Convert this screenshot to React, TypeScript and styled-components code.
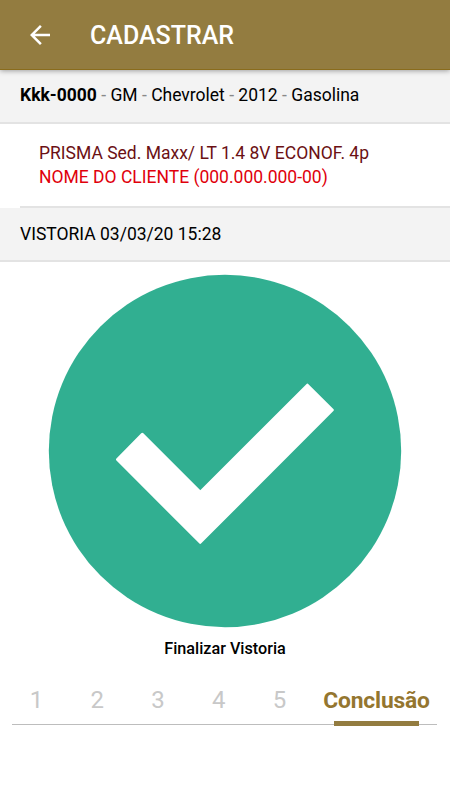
import React, { useState } from 'react';
import styled, { createGlobalStyle } from 'styled-components';

const STEPS = ['1', '2', '3', '4', '5'];

const App: React.FC = () => {
  const [step, setStep] = useState('final');

  return (
    <Screen>
      <GlobalStyle />
      <Header>
        <BackButton aria-label="Voltar">
          <svg width="20" height="20" viewBox="4 4 16 16" fill="#fff">
            <path d="M20 11H7.83l5.59-5.59L12 4l-8 8 8 8 1.41-1.41L7.83 13H20v-2z" />
          </svg>
        </BackButton>
        <Title>CADASTRAR</Title>
      </Header>

      <Bar $bottom={2}>
        <BarText>
          <strong>Kkk-0000</strong> <i>-</i> GM <i>-</i> Chevrolet <i>-</i> 2012 <i>-</i> Gasolina
        </BarText>
      </Bar>

      <Details>
        <Vehicle>PRISMA Sed. Maxx/ LT 1.4 8V ECONOF. 4p</Vehicle>
        <Client>NOME DO CLIENTE (000.000.000-00)</Client>
      </Details>

      <Bar>
        <BarText>VISTORIA 03/03/20 15:28</BarText>
      </Bar>

      <Finish>
        <svg width="354" height="354" viewBox="0 0 354 354">
          <circle cx="177" cy="177" r="176.2" fill="#31af91" />
          <path
            d="M94.3 160.3L69.5 185.5L152.2 268.3L284.3 136L259.4 111.2L152.3 218.3Z"
            fill="#fff"
            stroke="#fff"
            strokeWidth="3"
            strokeLinejoin="round"
          />
        </svg>
        <FinishLabel>Finalizar Vistoria</FinishLabel>
      </Finish>

      <Tabs>
        {STEPS.map((s) => (
          <Tab key={s} $active={step === s} onClick={() => setStep(s)}>
            {s}
          </Tab>
        ))}
        <LastTab $active={step === 'final'} onClick={() => setStep('final')}>
          Conclusão
        </LastTab>
      </Tabs>
    </Screen>
  );
};

export default App;

// Styled Components
const GlobalStyle = createGlobalStyle`
  * {
    box-sizing: border-box;
  }

  body {
    margin: 0;
    background: #fff;
    font-family: Roboto, sans-serif;
  }
`;

const Screen = styled.div`
  width: 450px;
  height: 800px;
  overflow: hidden;
  background: #fff;
`;

const Header = styled.header`
  position: relative;
  display: flex;
  align-items: center;
  height: 70px;
  padding: 1px 0 0 30px;
  background: #937c40;
  border-bottom: 1px solid #8a6c1c;
  box-shadow: 0 1px 5px rgba(0, 0, 0, 0.35);
`;

const BackButton = styled.button`
  display: flex;
  padding: 0;
  border: none;
  background: none;
  cursor: pointer;
`;

const Title = styled.h1`
  margin: 1px 0 0 40px;
  color: #fff;
  font-size: 25px;
  font-weight: 500;
  line-height: 30px;
`;

const Bar = styled.div<{ $bottom?: number }>`
  display: flex;
  align-items: center;
  height: 54px;
  padding: 0 20px ${(props) => props.$bottom ?? 0}px;
  background: #f3f3f3;
  border-bottom: 2px solid #e3e3e3;
`;

const BarText = styled.div`
  color: #000;
  font-size: 17.5px;
  line-height: 24px;
  white-space: nowrap;

  strong {
    font-weight: 700;
  }

  i {
    color: #888;
    font-style: normal;
  }
`;

const Details = styled.div`
  height: 84px;
  margin-left: 20px;
  padding: 17px 19px 0;
  border-bottom: 2px solid #e3e3e3;
  font-size: 17.5px;
  line-height: 24px;
  white-space: nowrap;
`;

const Vehicle = styled.div`
  color: #6b1014;
`;

const Client = styled.div`
  color: #e0000b;
`;

const Finish = styled.div`
  display: flex;
  flex-direction: column;
  align-items: center;
  padding-top: 12px;
`;

const FinishLabel = styled.div`
  margin-top: 11px;
  color: #000;
  font-size: 16.2px;
  font-weight: 500;
  line-height: 20px;
`;

const Tabs = styled.nav`
  display: grid;
  grid-template-columns: repeat(5, 60.8px) 1fr;
  height: 48px;
  margin: 19px 13px 0 12px;
  background: linear-gradient(#bdbdbd, #bdbdbd) 0 46px / 100% 1px no-repeat;
`;

const Tab = styled.button<{ $active: boolean }>`
  display: flex;
  justify-content: center;
  padding: 8px 12px 0 0;
  border: none;
  background: none;
  color: ${(props) => (props.$active ? '#94762f' : '#c8c8c8')};
  font-family: inherit;
  font-size: 24px;
  font-weight: ${(props) => (props.$active ? 700 : 400)};
  line-height: 28px;
  white-space: nowrap;
  cursor: pointer;
`;

const LastTab = styled(Tab)`
  min-width: 0;
  padding: 9px 0 0;
  background: ${(props) =>
    props.$active ? 'linear-gradient(#937c40, #937c40) 18px 43px / 85px 6px no-repeat' : 'none'};
  font-size: 22.8px;
  letter-spacing: -0.15px;
`;
